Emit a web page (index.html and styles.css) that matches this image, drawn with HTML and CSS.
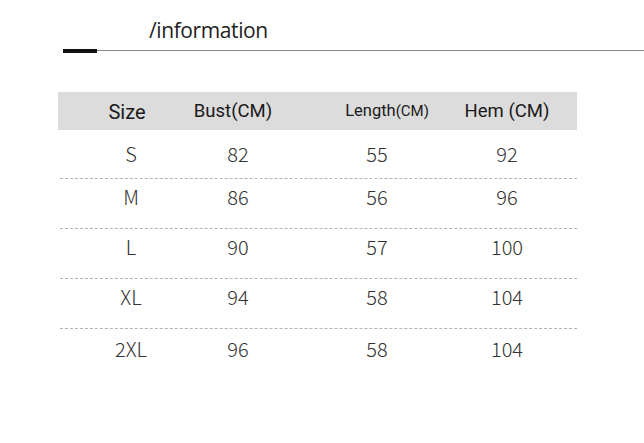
FILE: index.html
```html
<!DOCTYPE html>
<html>
<head>
<meta charset="utf-8">
<link rel="stylesheet" href="styles.css">
</head>
<body>
<div class="page">
  <div class="title">/information</div>
  <div class="rule"><div class="rule-bar"></div><div class="rule-line"></div></div>
  <div class="table">
    <div class="head">
      <div class="hcell hcell-size">Size</div>
      <div class="hcell">Bust(CM)</div>
      <div class="hcell hcell-small">Length<span class="tiny">(CM)</span></div>
      <div class="hcell">Hem (CM)</div>
    </div>
    <div class="row row-first"><div class="cell">S</div><div class="cell">82</div><div class="cell">55</div><div class="cell">92</div></div>
    <div class="row"><div class="cell">M</div><div class="cell">86</div><div class="cell">56</div><div class="cell">96</div></div>
    <div class="row"><div class="cell">L</div><div class="cell">90</div><div class="cell">57</div><div class="cell">100</div></div>
    <div class="row"><div class="cell">XL</div><div class="cell">94</div><div class="cell">58</div><div class="cell">104</div></div>
    <div class="row row-last"><div class="cell">2XL</div><div class="cell">96</div><div class="cell">58</div><div class="cell">104</div></div>
  </div>
</div>
</body>
</html>
```

FILE: styles.css
```css
html, body {
  margin: 0;
  padding: 0;
  background: #ffffff;
}
.page {
  width: 644px;
  height: 443px;
  font-family: "Noto Sans CJK SC", "Noto Sans", sans-serif;
  color: #222;
  overflow: hidden;
}
.title {
  font-family: "Open Sans", "Noto Sans", sans-serif;
  font-size: 21px;
  letter-spacing: -0.4px;
  line-height: 26px;
  padding: 17px 0 0 149px;
  color: #1e1e1e;
  height: 31px;
}
.rule {
  display: flex;
  align-items: center;
  margin-left: 63px;
  height: 5px;
}
.rule-bar {
  width: 34px;
  height: 4px;
  background: #111;
}
.rule-line {
  flex: 1;
  height: 1px;
  background: #8a8a8a;
}
.table {
  margin: 39px 0 0 58px;
  width: 519px;
}
.head {
  display: grid;
  grid-template-columns: 106px 154px 120px 100px;
  padding-left: 19px;
  height: 38px;
  align-items: center;
  background: #dcdcdc;
  font-family: Roboto, "Noto Sans", sans-serif;
  font-size: 18.5px;
  color: #1a1a1a;
}
.hcell {
  width: 100px;
  text-align: center;
  white-space: nowrap;
  line-height: 22px;
}
.hcell-size {
  font-size: 20px;
  padding-top: 2px;
}
.hcell-small {
  font-size: 16.5px;
}
.tiny {
  font-size: 15px;
}
.row {
  display: grid;
  grid-template-columns: 107px 139px 130px 100px;
  padding: 6px 0 19px 23px;
  margin: 0 0 0 2px;
  border-bottom: 1px dashed #b4b4b4;
  font-size: 20px;
  font-weight: 300;
  color: #333;
}
.row-first {
  padding-top: 12px;
  padding-bottom: 12px;
}
.row-last {
  border-bottom: none;
  padding-top: 8px;
}
.cell {
  width: 100px;
  line-height: 24px;
  text-align: center;
  margin-left: -2px;
}
```
